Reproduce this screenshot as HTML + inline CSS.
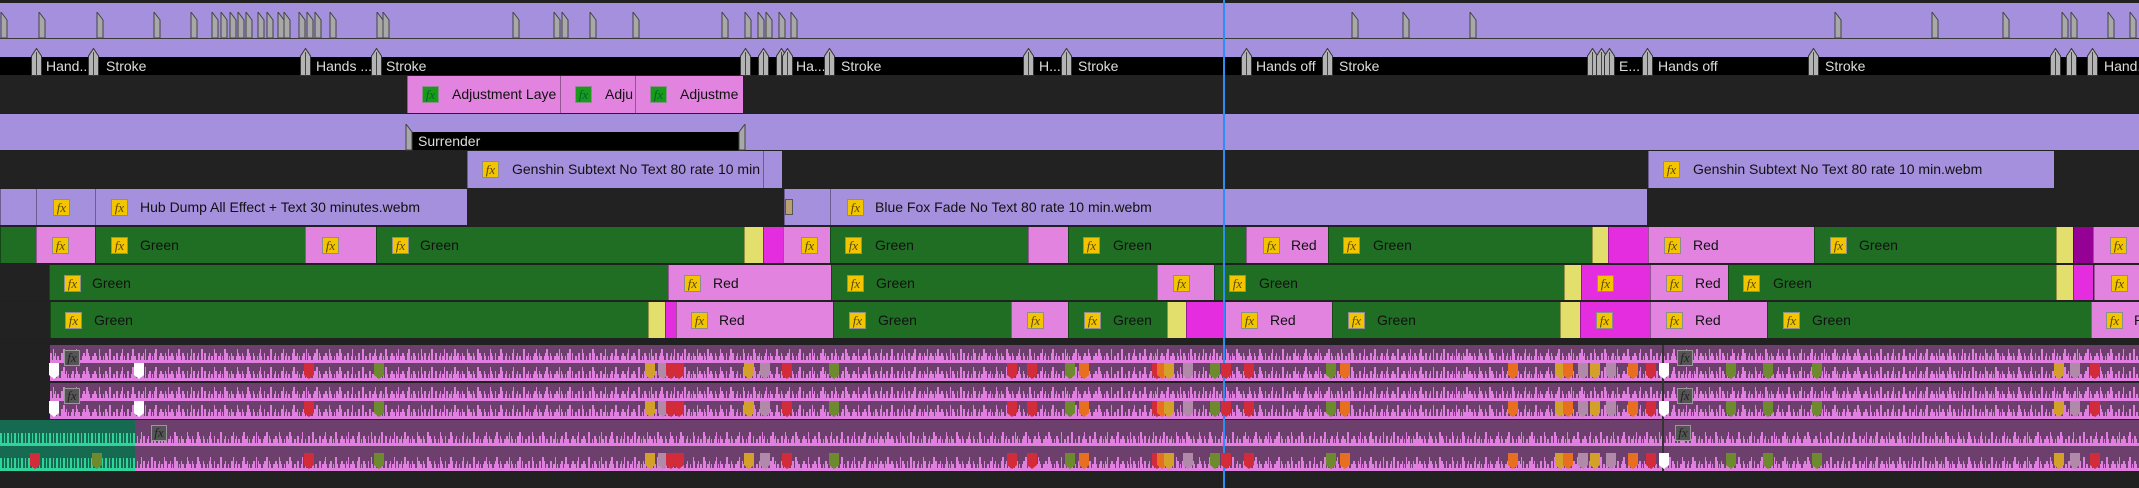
<!DOCTYPE html>
<html><head><meta charset="utf-8">
<style>
*{margin:0;padding:0;box-sizing:border-box}
body{width:2139px;height:488px;background:#212121;position:relative;overflow:hidden;font-family:"Liberation Sans",sans-serif}
.r{position:absolute;left:0;width:2139px}
.c{position:absolute;top:0;height:100%;overflow:hidden;white-space:nowrap;border-left:1px solid rgba(0,0,0,.35);color:#111;font-size:14px}
.L{background:#a590dd}.P{background:#e383e0}.G{background:#1f6e23}.Y{background:#e2df6c}.M{background:#e52de0}.D{background:#950095}
.fx{position:absolute;top:10px;width:17px;height:17px;background:#f3c400;border:1px solid #8d8d8d;font-style:italic;font-family:"Liberation Serif",serif;font-size:13px;line-height:15px;text-align:center;color:#5a4a00}
.fg{background:#1a9a1a;color:#063}
.fa{background:#555;color:#222;border-color:#999}
.t{position:absolute;top:10px;line-height:17px}
.bar{position:absolute;background:#000;color:#ddd;font-size:14px;line-height:18px;white-space:nowrap;overflow:hidden}
.lbl{position:absolute;top:0;color:#ddd;font-size:14px;line-height:19px}
.mk{position:absolute}
.au{background:#6d3f6d}
.lane{position:absolute;left:0;width:100%;
background:
linear-gradient(#e07fe0,#e07fe0) bottom/100% 3px no-repeat,
repeating-linear-gradient(90deg,#e07fe0 0 2px,transparent 2px 4px,#e07fe0 4px 5px,transparent 5px 7px) bottom 3px left 0/100% 4px no-repeat,
repeating-linear-gradient(90deg,#e07fe0 0 2px,transparent 2px 5px,#e07fe0 5px 6px,transparent 6px 11px) bottom 3px left 0/100% 7px no-repeat,
repeating-linear-gradient(90deg,transparent 0 3px,#e07fe0 3px 4px,transparent 4px 13px,#e07fe0 13px 15px,transparent 15px 23px) bottom 3px left 0/100% 11px no-repeat}
.gl{background:
linear-gradient(#2fd49a,#2fd49a) bottom/100% 3px no-repeat,
repeating-linear-gradient(90deg,#2fd49a 0 2px,transparent 2px 4px,#2fd49a 4px 5px,transparent 5px 7px) bottom 3px left 0/100% 10px no-repeat,#176a52}
</style></head><body>

<div class="r L" style="top:3px;height:35px"></div>
<div class="r" style="top:38px;height:1px;background:#3a3a3a"></div>
<div class="r L" style="top:39px;height:18px"></div>
<div class="r" style="top:57px;height:18px;background:#000">
<span class="lbl" style="left:46px">Hand..</span><span class="lbl" style="left:106px">Stroke</span>
<span class="lbl" style="left:316px">Hands ...</span><span class="lbl" style="left:386px">Stroke</span>
<span class="lbl" style="left:796px">Ha...</span><span class="lbl" style="left:841px">Stroke</span>
<span class="lbl" style="left:1039px">H...</span><span class="lbl" style="left:1078px">Stroke</span>
<span class="lbl" style="left:1256px">Hands off</span><span class="lbl" style="left:1339px">Stroke</span>
<span class="lbl" style="left:1619px">E...</span><span class="lbl" style="left:1658px">Hands off</span>
<span class="lbl" style="left:1825px">Stroke</span><span class="lbl" style="left:2104px">Hand...</span>
</div>
<div class="r" style="top:76px;height:37px;background:#222">
<div class="c P" style="left:407px;width:153px"><span class="fx fg" style="left:14px">fx</span><span class="t" style="left:44px">Adjustment Laye</span></div>
<div class="c P" style="left:560px;width:75px"><span class="fx fg" style="left:14px">fx</span><span class="t" style="left:44px">Adju</span></div>
<div class="c P" style="left:635px;width:108px"><span class="fx fg" style="left:14px">fx</span><span class="t" style="left:44px">Adjustme</span></div>
</div>
<div class="r L" style="top:114px;height:36px"></div>
<div class="bar" style="top:132px;left:407px;width:336px;height:18px"><span style="padding-left:11px">Surrender</span></div>
<div class="r" style="top:151px;height:37px;background:#222">
<div class="c L" style="left:467px;width:296px"><span class="fx" style="left:14px">fx</span><span class="t" style="left:44px">Genshin Subtext No Text 80 rate 10 min</span></div>
<div class="c L" style="left:763px;width:19px"></div>
<div class="c L" style="left:1648px;width:406px"><span class="fx" style="left:14px">fx</span><span class="t" style="left:44px">Genshin Subtext No Text 80 rate 10 min.webm</span></div>
</div>
<div class="r" style="top:189px;height:36px;background:#222">
<div class="c L" style="left:0;width:36px"></div>
<div class="c L" style="left:36px;width:59px"><span class="fx" style="left:16px">fx</span></div>
<div class="c L" style="left:95px;width:372px"><span class="fx" style="left:15px">fx</span><span class="t" style="left:44px">Hub Dump All Effect + Text 30 minutes.webm</span></div>
<div class="c L" style="left:784px;width:46px"><span style="position:absolute;left:0;top:10px;width:8px;height:16px;background:#b8a070;border:1px solid #555"></span></div>
<div class="c L" style="left:830px;width:817px"><span class="fx" style="left:16px">fx</span><span class="t" style="left:44px">Blue Fox Fade No Text 80 rate 10 min.webm</span></div>
</div>
<div class="r" style="top:227px;height:36px;background:#222">
<div class="c G" style="left:0;width:36px"></div>
<div class="c P" style="left:36px;width:59px"><span class="fx" style="left:15px">fx</span></div>
<div class="c G" style="left:95px;width:210px"><span class="fx" style="left:15px">fx</span><span class="t" style="left:44px">Green</span></div>
<div class="c P" style="left:305px;width:71px"><span class="fx" style="left:16px">fx</span></div>
<div class="c G" style="left:376px;width:368px"><span class="fx" style="left:15px">fx</span><span class="t" style="left:43px">Green</span></div>
<div class="c Y" style="left:744px;width:19px"></div>
<div class="c M" style="left:763px;width:20px"></div>
<div class="c P" style="left:783px;width:47px"><span class="fx" style="left:17px">fx</span></div>
<div class="c G" style="left:830px;width:198px"><span class="fx" style="left:14px">fx</span><span class="t" style="left:44px">Green</span></div>
<div class="c P" style="left:1028px;width:40px"></div>
<div class="c G" style="left:1068px;width:178px"><span class="fx" style="left:14px">fx</span><span class="t" style="left:44px">Green</span></div>
<div class="c P" style="left:1246px;width:82px"><span class="fx" style="left:16px">fx</span><span class="t" style="left:44px">Red</span></div>
<div class="c G" style="left:1328px;width:264px"><span class="fx" style="left:14px">fx</span><span class="t" style="left:44px">Green</span></div>
<div class="c Y" style="left:1592px;width:16px"></div>
<div class="c M" style="left:1608px;width:40px"></div>
<div class="c P" style="left:1648px;width:166px"><span class="fx" style="left:15px">fx</span><span class="t" style="left:44px">Red</span></div>
<div class="c G" style="left:1814px;width:242px"><span class="fx" style="left:15px">fx</span><span class="t" style="left:44px">Green</span></div>
<div class="c Y" style="left:2056px;width:17px"></div>
<div class="c D" style="left:2073px;width:20px"></div>
<div class="c P" style="left:2093px;width:46px"><span class="fx" style="left:16px">fx</span></div>
</div>
<div class="r" style="top:265px;height:35px;background:#222">
<div class="c G" style="left:49px;width:619px"><span class="fx" style="left:14px">fx</span><span class="t" style="left:42px">Green</span></div>
<div class="c P" style="left:668px;width:163px"><span class="fx" style="left:15px">fx</span><span class="t" style="left:44px">Red</span></div>
<div class="c G" style="left:831px;width:326px"><span class="fx" style="left:15px">fx</span><span class="t" style="left:44px">Green</span></div>
<div class="c P" style="left:1157px;width:57px"><span class="fx" style="left:15px">fx</span></div>
<div class="c G" style="left:1214px;width:350px"><span class="fx" style="left:14px">fx</span><span class="t" style="left:44px">Green</span></div>
<div class="c Y" style="left:1564px;width:17px"></div>
<div class="c M" style="left:1581px;width:69px"><span class="fx" style="left:15px">fx</span></div>
<div class="c P" style="left:1650px;width:78px"><span class="fx" style="left:15px">fx</span><span class="t" style="left:44px">Red</span></div>
<div class="c G" style="left:1728px;width:328px"><span class="fx" style="left:14px">fx</span><span class="t" style="left:44px">Green</span></div>
<div class="c Y" style="left:2056px;width:17px"></div>
<div class="c M" style="left:2073px;width:20px"></div>
<div class="c P" style="left:2094px;width:45px"><span class="fx" style="left:16px">fx</span></div>
</div>
<div class="r" style="top:302px;height:36px;background:#222">
<div class="c G" style="left:50px;width:598px"><span class="fx" style="left:14px">fx</span><span class="t" style="left:43px">Green</span></div>
<div class="c Y" style="left:648px;width:17px"></div>
<div class="c M" style="left:665px;width:11px"></div>
<div class="c P" style="left:676px;width:157px"><span class="fx" style="left:14px">fx</span><span class="t" style="left:42px">Red</span></div>
<div class="c G" style="left:833px;width:178px"><span class="fx" style="left:15px">fx</span><span class="t" style="left:44px">Green</span></div>
<div class="c P" style="left:1011px;width:57px"><span class="fx" style="left:15px">fx</span></div>
<div class="c G" style="left:1068px;width:99px"><span class="fx" style="left:15px">fx</span><span class="t" style="left:44px">Green</span></div>
<div class="c Y" style="left:1167px;width:19px"></div>
<div class="c M" style="left:1186px;width:39px"></div>
<div class="c P" style="left:1225px;width:107px"><span class="fx" style="left:15px">fx</span><span class="t" style="left:44px">Red</span></div>
<div class="c G" style="left:1332px;width:228px"><span class="fx" style="left:15px">fx</span><span class="t" style="left:44px">Green</span></div>
<div class="c Y" style="left:1560px;width:20px"></div>
<div class="c M" style="left:1580px;width:70px"><span class="fx" style="left:15px">fx</span></div>
<div class="c P" style="left:1650px;width:117px"><span class="fx" style="left:15px">fx</span><span class="t" style="left:44px">Red</span></div>
<div class="c G" style="left:1767px;width:324px"><span class="fx" style="left:15px">fx</span><span class="t" style="left:44px">Green</span></div>
<div class="c P" style="left:2091px;width:48px"><span class="fx" style="left:14px">fx</span><span class="t" style="left:42px">R</span></div>
</div>
<div class="r au" style="top:345px;height:36px;left:50px;width:2089px">
<div class="lane" style="top:0;height:18px"></div><div class="lane" style="top:18px;height:18px"></div>
<span class="fx fa" style="left:14px;top:5px;width:16px;height:16px;line-height:14px">fx</span>
<span class="fx fa" style="left:1627px;top:5px;width:16px;height:16px;line-height:14px">fx</span>
</div>
<div class="r au" style="top:383px;height:36px;left:50px;width:2089px">
<div class="lane" style="top:0;height:18px"></div><div class="lane" style="top:18px;height:18px"></div>
<span class="fx fa" style="left:14px;top:5px;width:16px;height:16px;line-height:14px">fx</span>
<span class="fx fa" style="left:1627px;top:5px;width:16px;height:16px;line-height:14px">fx</span>
</div>
<div class="r au" style="top:420px;height:51px">
<div class="lane" style="top:0;height:26px"></div><div class="lane" style="top:26px;height:25px"></div>
<div class="gl" style="position:absolute;left:0;top:0;width:135px;height:26px"></div>
<div class="gl" style="position:absolute;left:0;top:26px;width:135px;height:25px"></div>
<span class="fx fa" style="left:151px;top:5px;width:16px;height:16px;line-height:14px">fx</span>
<span class="fx fa" style="left:1675px;top:5px;width:16px;height:16px;line-height:14px">fx</span>
</div>
<div style="position:absolute;left:1662px;top:345px;width:2px;height:126px;background:#333"></div>
<div style="position:absolute;left:1223px;top:0;width:2px;height:488px;background:#2f8cf0"></div>

<script>
function add(html){document.body.insertAdjacentHTML('beforeend',html)}
var a=[3,41,99,156,193,214,223,232,240,248,260,269,280,286,301,309,317,332,379,385,515,556,564,592,635,724,747,760,768,781,793,1354,1405,1472,1837,1934,2005,2064,2073,2110,2132];
a.forEach(function(x){add('<svg class="mk" style="left:'+(x-3)+'px;top:12px" width="8" height="27"><polygon points="1,0 7,8 7,26 1,26" fill="#a8a8a8" stroke="#444" stroke-width="1"/></svg>')});
var b=[36,93,305,376,745,763,781,787,829,1028,1066,1246,1327,1592,1601,1609,1647,1813,2055,2071,2092];
b.forEach(function(x){add('<svg class="mk" style="left:'+(x-5)+'px;top:48px" width="11" height="28"><polygon points="0.5,8 5.5,0.5 10.5,8 10.5,27.5 0.5,27.5" fill="#b4b4b4" stroke="#333" stroke-width="1"/><line x1="5.5" y1="4" x2="5.5" y2="28" stroke="#444"/></svg>')});
add('<svg class="mk" style="left:405px;top:124px" width="8" height="27"><polygon points="1,0 7,8 7,26 1,26" fill="#a8a8a8" stroke="#444"/></svg>');
add('<svg class="mk" style="left:738px;top:124px" width="8" height="27"><polygon points="7,0 1,8 1,26 7,26" fill="#a8a8a8" stroke="#444"/></svg>');
var C={w:'#fff',r:'#d22b3a',o:'#6e8a2e',g:'#d3a12a',l:'#b08aa8',n:'#e86e20'};
var m=[[54,'w'],[139,'w'],[309,'r'],[379,'o'],[650,'g'],[663,'l'],[671,'r'],[679,'r'],[749,'g'],[765,'l'],[787,'r'],[834,'o'],[1012,'r'],[1032,'r'],[1070,'o'],[1084,'n'],[1157,'r'],[1162,'n'],[1169,'g'],[1188,'l'],[1215,'o'],[1226,'r'],[1249,'r'],[1331,'o'],[1345,'n'],[1513,'n'],[1560,'g'],[1568,'n'],[1583,'l'],[1595,'g'],[1611,'l'],[1633,'n'],[1651,'r'],[1664,'w'],[1731,'o'],[1768,'o'],[1817,'o'],[2059,'g'],[2075,'l'],[2095,'r']];
[363,401,453].forEach(function(t){
 m.forEach(function(p){var x=p[0];if(t==453&&x<140&&p[1]=='w'){return}
  add('<svg class="mk" style="left:'+(x-5)+'px;top:'+t+'px" width="10" height="16"><polygon points="0,0 10,0 10,12 5,16 0,12" fill="'+C[p[1]]+'"/></svg>')});
});
add('<svg class="mk" style="left:30px;top:453px" width="10" height="16"><polygon points="0,0 10,0 10,12 5,16 0,12" fill="#d22b3a"/></svg>');
add('<svg class="mk" style="left:92px;top:453px" width="10" height="16"><polygon points="0,0 10,0 10,12 5,16 0,12" fill="#6e8a2e"/></svg>');
</script>
</body></html>
